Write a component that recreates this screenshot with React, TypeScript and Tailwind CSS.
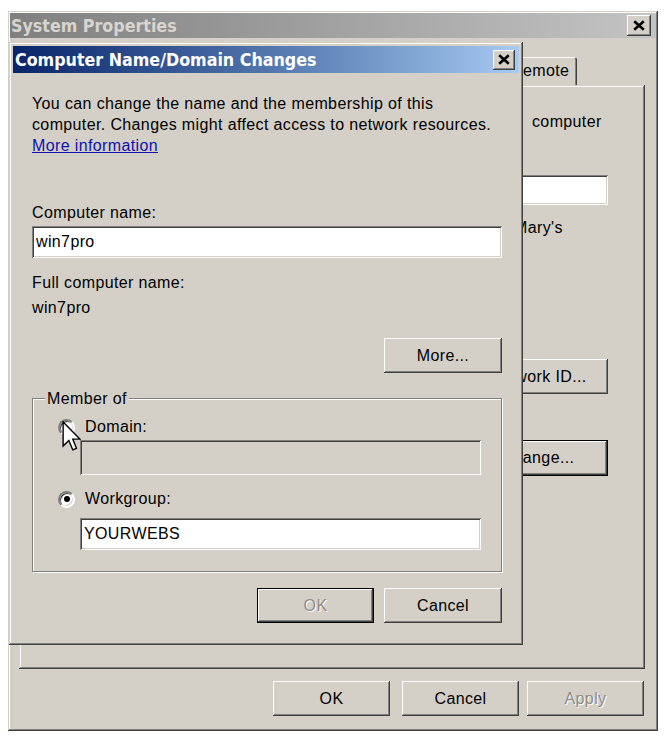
import React from 'react';

// classic 3D edges
const raised =
  'shadow-[inset_-1px_-1px_#404040,inset_1px_1px_#ffffff,inset_-2px_-2px_#808080,inset_2px_2px_#d4d0c8]';
const frame =
  'shadow-[inset_-1px_-1px_#404040,inset_1px_1px_#d4d0c8,inset_-2px_-2px_#808080,inset_2px_2px_#ffffff]';
const sunken =
  'shadow-[inset_1px_1px_#808080,inset_-1px_-1px_#ffffff,inset_2px_2px_#404040,inset_-2px_-2px_#d4d0c8]';

const titleFont = "font-['DejaVu_Sans_Condensed','DejaVu_Sans',sans-serif] font-bold text-[17.7px]";

interface ButtonProps {
  label: string;
  className?: string;
  disabled?: boolean;
  isDefault?: boolean;
}

const Button: React.FC<ButtonProps> = ({ label, className = '', disabled, isDefault }) => (
  <div
    className={`flex items-center justify-center shrink-0 bg-[#d4d0c8] ${raised} ${
      isDefault ? 'border border-black' : ''
    } ${disabled ? 'text-[#8c8c8c] [text-shadow:1px_1px_0_#ffffff]' : 'text-black'} ${className}`}
  >
    {label}
  </div>
);

const CloseBox: React.FC<{ className?: string }> = ({ className = '' }) => (
  <div className={`flex items-center justify-center bg-[#d4d0c8] ${raised} ${className}`}>
    <svg viewBox="0 0 10 9" className="w-[12px] h-[11px]">
      <path d="M1 1 L9 8 M9 1 L1 8" stroke="black" strokeWidth="2.2" />
    </svg>
  </div>
);

const Radio: React.FC<{ checked?: boolean }> = ({ checked }) => (
  <span className="flex items-center justify-center w-[17px] h-[17px] rounded-full bg-white border-2 border-[#808080] border-r-white border-b-white shadow-[inset_1px_1px_#404040,inset_-1px_-1px_#d4d0c8]">
    {checked && <span className="w-[6px] h-[6px] rounded-full bg-black" />}
  </span>
);

export default function App() {
  return (
    <div className="relative w-[665px] h-[738px] bg-white overflow-hidden pl-[8px] pt-[11px] font-['Liberation_Sans',Arial,sans-serif] text-[16px] leading-[20px] tracking-[0.37px] text-black">
      {/* System Properties */}
      <div className={`w-[650px] h-[720px] bg-[#d4d0c8] p-[2px] flex flex-col ${frame}`}>
        <div className="h-[25px] flex items-center justify-between pl-[1px] pr-[5px] bg-gradient-to-r from-[#808080] to-[#c4c4c4]">
          <span className={`${titleFont} tracking-normal text-[#d8d5ce]`}>System Properties</span>
          <CloseBox className="w-[24px] h-[21px]" />
        </div>

        <div className="mt-[19px] h-[28px] flex">
          <div className="ml-[495px] w-[72px] pl-[6px] flex items-center rounded-t-[3px] shadow-[inset_1px_1px_#ffffff,inset_-1px_0_#404040,inset_-2px_0_#808080]">
            Remote
          </div>
        </div>

        <div className={`ml-[9px] w-[626px] h-[584px] pl-[449px] pt-[27px] flex flex-col ${frame}`}>
          <div className="pl-[64px] whitespace-nowrap">computer</div>
          <div className={`mt-[43px] ml-[46px] w-[94px] h-[30px] bg-white ${sunken}`} />
          <div className="mt-[13px] pl-[46px]">Mary's</div>
          <Button label="Network ID..." className="mt-[121px] w-[140px] h-[35px]" />
          <Button label="Change..." isDefault className="mt-[46px] w-[140px] h-[36px]" />
        </div>

        <div className="mt-[12px] pr-[12px] flex justify-end">
          <Button label="OK" className="w-[117px] h-[35px]" />
          <Button label="Cancel" className="ml-[12px] w-[117px] h-[35px]" />
          <Button label="Apply" disabled className="ml-[8px] w-[117px] h-[35px]" />
        </div>
      </div>

      {/* Computer Name/Domain Changes */}
      <div className={`absolute left-[9px] top-[42px] w-[514px] h-[603px] bg-[#d4d0c8] p-[4px] flex flex-col ${frame}`}>
        <div className="h-[27px] shrink-0 flex items-center justify-between pl-[2px] pr-[4px] bg-gradient-to-r from-[#0a246a] to-[#a6caf0]">
          <span className={`${titleFont} tracking-normal text-white`}>Computer Name/Domain Changes</span>
          <CloseBox className="w-[22px] h-[20px]" />
        </div>

        <div className="pl-[19px] pr-[17px] flex flex-col">
          <p className="mt-[20px] leading-[21px]">
            You can change the name and the membership of this
            <br />
            computer. Changes might affect access to network resources.
            <br />
            <span className="text-[#1010b0] underline">More information</span>
          </p>

          <div className="mt-[47px]">Computer name:</div>
          <div className={`mt-[3px] h-[32px] bg-white pl-[4px] flex items-center ${sunken}`}>win7pro</div>

          <div className="mt-[15px]">Full computer name:</div>
          <div className="mt-[5px]">win7pro</div>

          <Button label="More..." className="mt-[20px] self-end w-[118px] h-[35px]" />

          <div className="relative mt-[25px] h-[174px] border border-[#808080] shadow-[inset_1px_1px_#ffffff,1px_1px_#ffffff] pt-[18px] pl-[25px] flex flex-col">
            <span className="absolute left-[12px] top-[-10px] px-[2px] bg-[#d4d0c8]">Member of</span>

            <div className="h-[20px] flex items-center gap-[10px]">
              <Radio />
              <span>Domain:</span>
            </div>
            <div className={`mt-[3px] ml-[22px] w-[401px] h-[35px] bg-[#d4d0c8] ${sunken}`} />

            <div className="mt-[14px] h-[20px] flex items-center gap-[10px]">
              <Radio checked />
              <span>Workgroup:</span>
            </div>
            <div className={`mt-[9px] ml-[22px] w-[401px] h-[32px] bg-white pl-[4px] flex items-center ${sunken}`}>
              YOURWEBS
            </div>
          </div>

          <div className="mt-[16px] flex justify-end gap-[10px]">
            <Button label="OK" disabled isDefault className="w-[117px] h-[35px]" />
            <Button label="Cancel" className="w-[118px] h-[35px]" />
          </div>
        </div>
      </div>

      {/* mouse pointer */}
      <svg viewBox="0 0 12 20" className="absolute left-[62px] top-[421px] w-[19px] h-[31px]">
        <path
          d="M0.6 0.6 L0.6 16.2 L4.3 12.6 L6.8 18.6 L9.2 17.6 L6.8 11.7 L11.4 11.7 Z"
          fill="white"
          stroke="black"
          strokeWidth="0.9"
          strokeLinejoin="miter"
        />
      </svg>
    </div>
  );
}
